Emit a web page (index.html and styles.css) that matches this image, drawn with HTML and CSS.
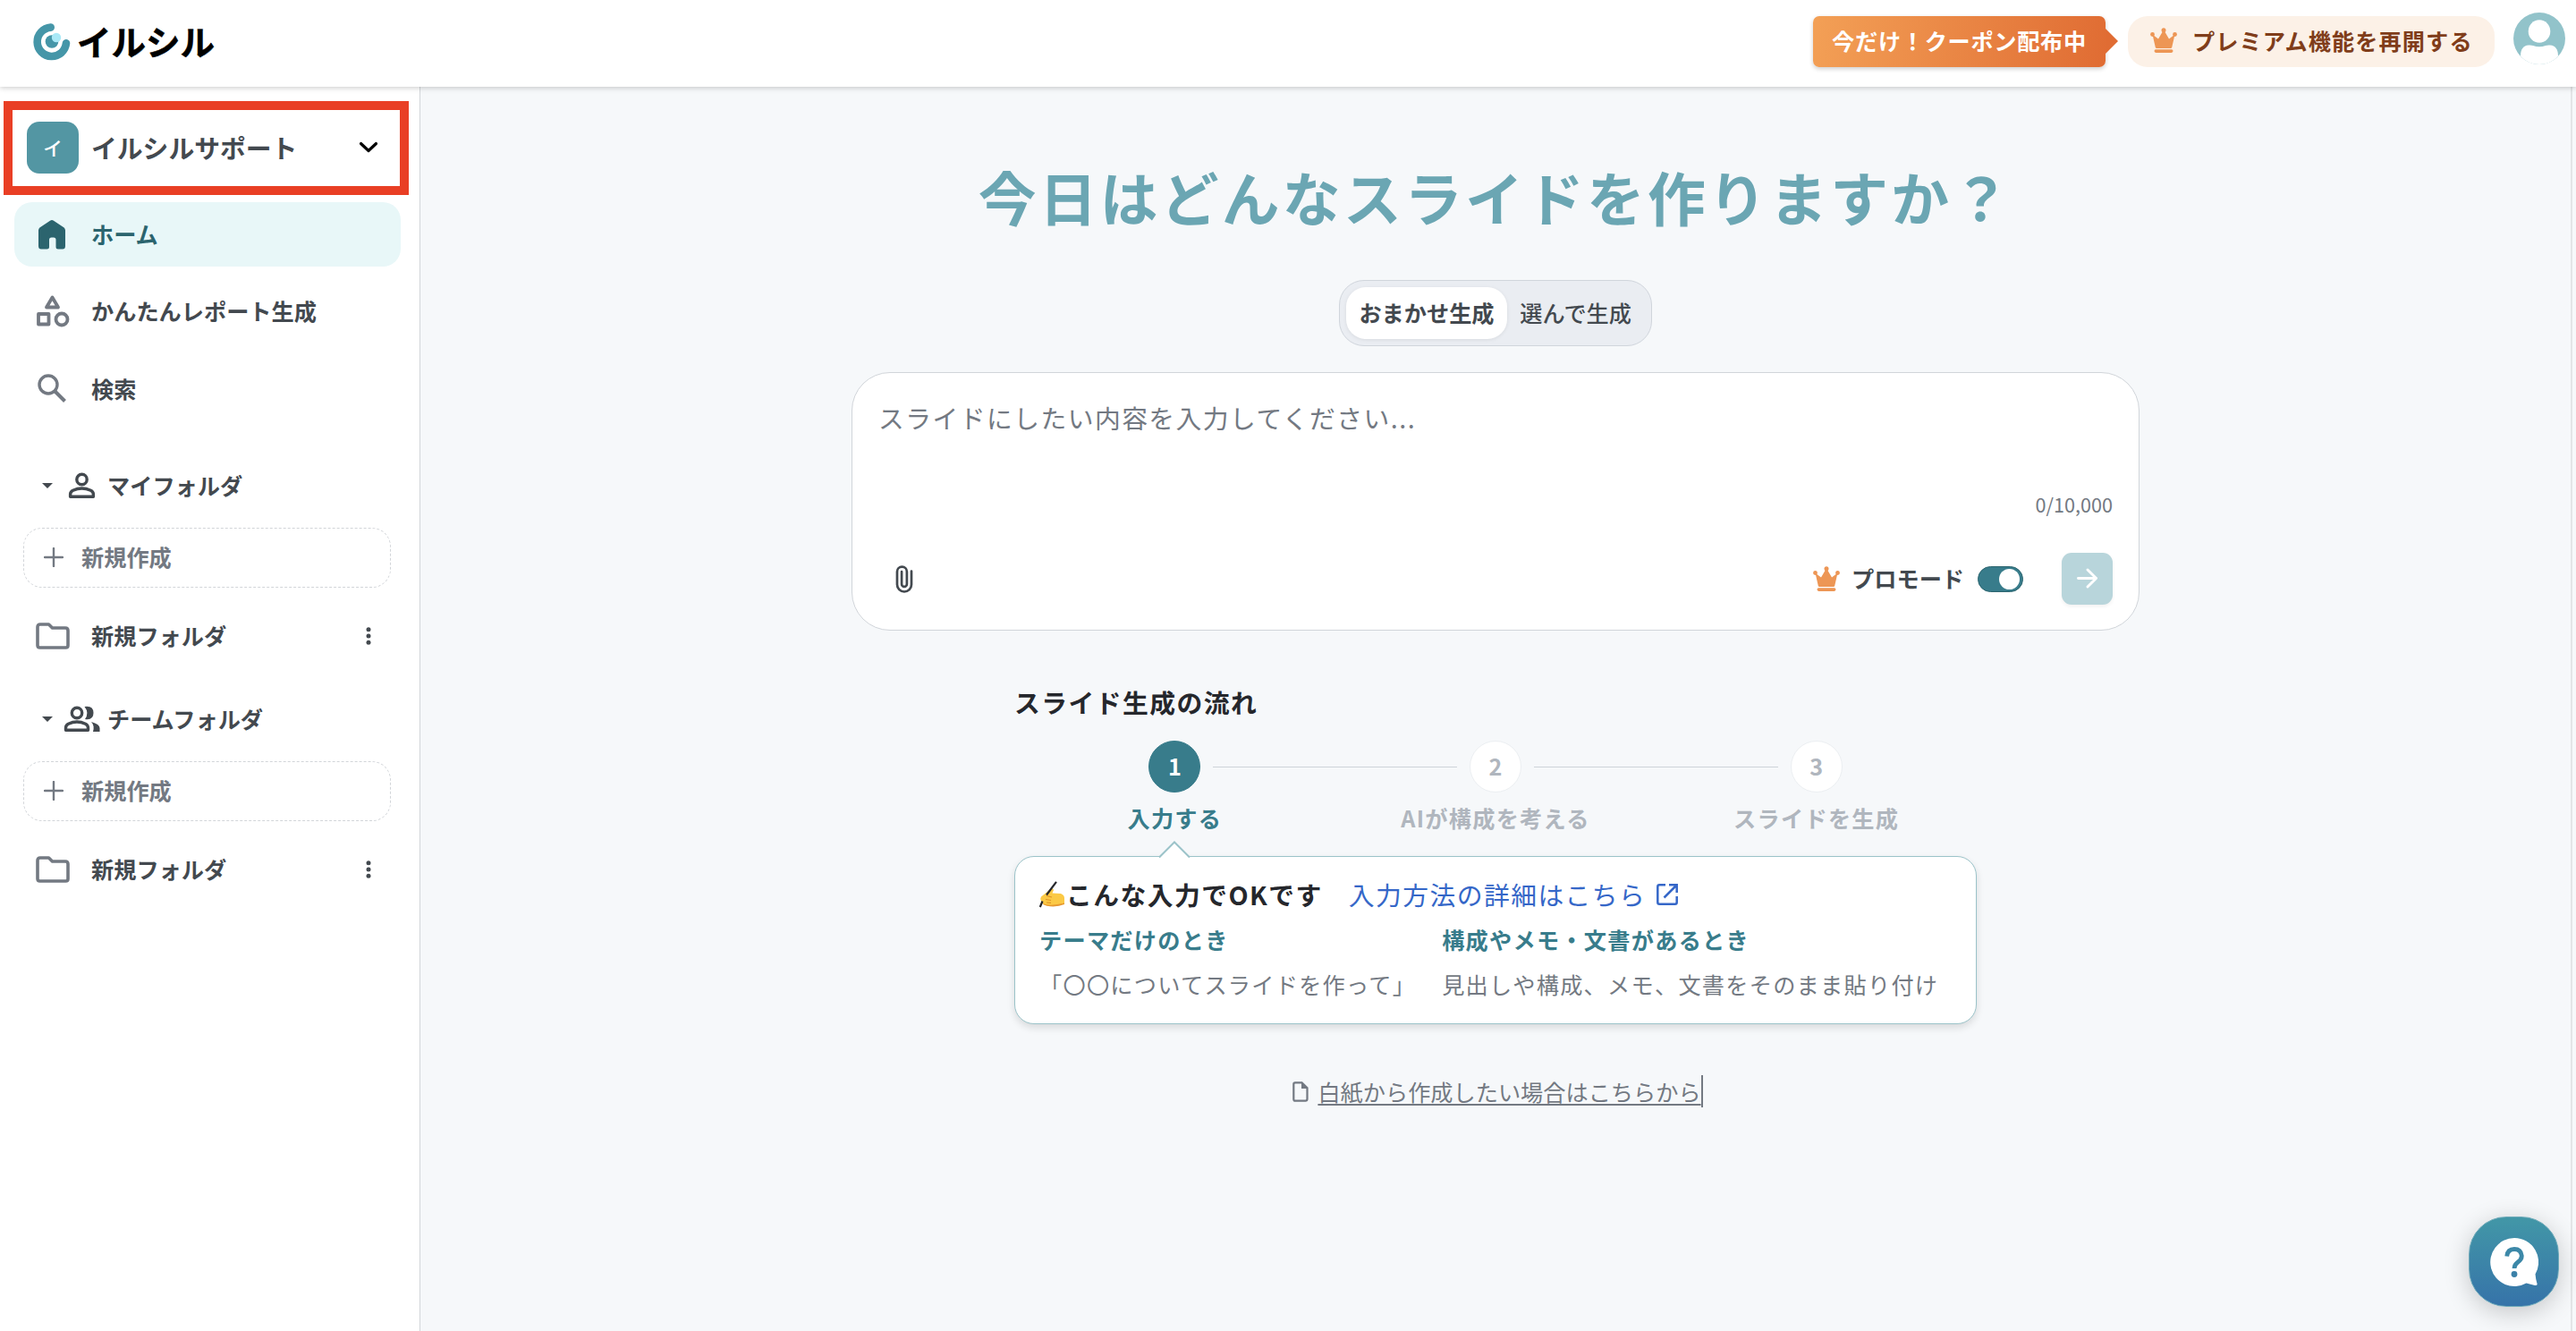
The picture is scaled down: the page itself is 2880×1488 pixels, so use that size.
FILE: index.html
```
<!DOCTYPE html>
<html lang="ja">
<head>
    <meta charset="UTF-8">
    <meta name="viewport" content="width=device-width, initial-scale=1.0">
    <title>イルシル</title>
    <link rel="stylesheet" href="styles.css">
</head>
<body>

    <!-- Shared icons -->
    <svg class="sprite" width="0" height="0">
        <symbol id="crown" viewBox="0 0 30 28">
            <path d="M2.500 7.500 9 12.500 14 4h2l5 8.500 6.500-5-3.300 14.500q-.3 1-1.400 1H7.200q-1.100 0-1.400-1z"/>
            <circle cx="15" cy="2.700" r="2.500"/><circle cx="2.500" cy="7.500" r="2.400"/><circle cx="27.500" cy="7.500" r="2.400"/>
            <rect x="4.500" y="24.300" width="21" height="3.600" rx="1.800"/>
        </symbol>
        <symbol id="folder" viewBox="0 0 38 30">
            <path d="M5 2h9.500l4 4H33q3 0 3 3v16.500q0 2.500-2.500 2.500H4.500Q2 28 2 25.500V5q0-3 3-3z" fill="none" stroke="currentColor" stroke-width="3.600" stroke-linejoin="round"/>
        </symbol>
        <symbol id="plus" viewBox="0 0 22 22">
            <path d="M11 1v20M1 11h20" stroke="currentColor" stroke-width="2.400" stroke-linecap="round"/>
        </symbol>
        <symbol id="dots" viewBox="0 0 6 20">
            <circle cx="3" cy="2.800" r="2.500"/><circle cx="3" cy="10" r="2.500"/><circle cx="3" cy="17.200" r="2.500"/>
        </symbol>
    </svg>

    <header class="header">
        <div class="logo">
            <svg class="logo-mark" viewBox="0 0 42 42">
                <path d="M19.700 4.600A16.200 16.200 0 1 0 37 22.200" fill="none" stroke="#4596a8" stroke-width="8.600" stroke-linecap="round"/>
                <circle cx="21" cy="20.500" r="7.300" fill="#4596a8"/>
                <circle cx="26" cy="16" r="5.200" fill="#a9e9f7"/>
            </svg>
            <span class="logo-text">イルシル</span>
        </div>
        <div class="header-right">
            <div class="coupon">今だけ！クーポン配布中</div>
            <div class="premium">
                <svg class="crown"><use href="#crown"/></svg>
                <span>プレミアム機能を再開する</span>
            </div>
            <svg class="user" viewBox="0 0 58 58">
                <circle cx="29" cy="29" r="29" fill="#92c3ca"/>
                <ellipse cx="29" cy="21" rx="12.300" ry="12.800" fill="#fff"/>
                <path d="M8 49q0-12 9-12.500 3-.3 5 .6 7 2.400 14 0 2-.9 5-.6 9 .5 9 12.500-9 9-21 9T8 49z" fill="#fff"/>
            </svg>
        </div>
    </header>

    <div class="layout">
        <aside class="sidebar">
            <div class="workspace">
                <div class="workspace-icon">イ</div>
                <span class="workspace-name">イルシルサポート</span>
                <svg class="chevron" viewBox="0 0 22 14"><path d="M2.500 2.500 11 10.500l8.500-8" fill="none" stroke="#000" stroke-width="3.200" stroke-linecap="round" stroke-linejoin="round"/></svg>
            </div>

            <nav class="menu">
                <div class="menu-item active">
                    <svg class="menu-icon" viewBox="0 0 40 40"><path d="M5 15.500q0-2 1.700-3.300L18 4.800q2-1.500 4 0l11.300 7.400Q35 13.500 35 15.500V33q0 3.500-3 3.500h-5q-2.500 0-2.500-2.500v-8q0-2.500-2.500-2.500h-2.500q-2.500 0-2.500 2.500v8q0 2.500-2.500 2.500H8q-3 0-3-3.500z" fill="currentColor"/></svg>
                    <span>ホーム</span>
                </div>
                <div class="menu-item">
                    <svg class="menu-icon" viewBox="0 0 40 40" fill="none" stroke="currentColor" stroke-width="3.800" stroke-linejoin="round"><path d="M20.500 4.500 27 15.500H14z"/><rect x="5" y="23" width="11.500" height="11.500"/><circle cx="31" cy="29" r="6.500"/></svg>
                    <span>かんたんレポート生成</span>
                </div>
                <div class="menu-item">
                    <svg class="menu-icon" viewBox="0 0 40 40" fill="none" stroke="currentColor" stroke-width="3.400"><circle cx="16" cy="15" r="10"/><path d="M23 22 34.500 33.500" stroke-width="4"/></svg>
                    <span>検索</span>
                </div>
            </nav>

            <section class="folders">
                <div class="folders-title">
                    <span class="caret"></span>
                    <svg class="folders-icon" viewBox="0 0 42 32" fill="none" stroke="currentColor" stroke-width="3.400"><circle cx="21.500" cy="9" r="5.700"/><path d="M8.600 28.300v-2.500q0-3 3-4.500 9.900-4.600 19.800 0 3 1.500 3 4.500v2.500z" stroke-linejoin="round"/></svg>
                    <span>マイフォルダ</span>
                </div>
                <div class="create"><svg><use href="#plus"/></svg><span>新規作成</span></div>
                <div class="folder-row">
                    <svg class="folder-icon"><use href="#folder"/></svg>
                    <span>新規フォルダ</span>
                    <svg class="dots"><use href="#dots"/></svg>
                </div>
            </section>

            <section class="folders">
                <div class="folders-title">
                    <span class="caret"></span>
                    <svg class="folders-icon" viewBox="0 0 42 32" fill="none" stroke="currentColor" stroke-width="3.400"><circle cx="16" cy="9" r="5.700"/><path d="M3.500 28.300v-2.500q0-3 3-4.500 9.500-4.600 19 0 3 1.500 3 4.500v2.500z" stroke-linejoin="round"/><path d="M24.500 2q10-1.500 10 7t-9.500 7q5-7-.5-14zM32 19q9.500 2.500 9.500 7v4H34q2-7-2-11z" fill="currentColor" stroke="none"/></svg>
                    <span>チームフォルダ</span>
                </div>
                <div class="create"><svg><use href="#plus"/></svg><span>新規作成</span></div>
                <div class="folder-row">
                    <svg class="folder-icon"><use href="#folder"/></svg>
                    <span>新規フォルダ</span>
                    <svg class="dots"><use href="#dots"/></svg>
                </div>
            </section>
        </aside>

        <main class="main">
            <h1>今日はどんなスライドを作りますか？</h1>

            <div class="tabs">
                <div class="tab selected">おまかせ生成</div>
                <div class="tab">選んで生成</div>
            </div>

            <div class="prompt">
                <div class="placeholder">スライドにしたい内容を入力してください...</div>
                <div class="counter">0/10,000</div>
                <div class="prompt-bar">
                    <svg class="clip" viewBox="0 0 20 31"><path d="M18 6.500V21.500a8 8 0 0 1-16 0V7a5.400 5.400 0 0 1 10.900 0V21a2.900 2.900 0 0 1-5.800 0V7" fill="none" stroke="#43494f" stroke-width="2.700" stroke-linecap="round"/></svg>
                    <svg class="crown"><use href="#crown"/></svg>
                    <span class="pro-label">プロモード</span>
                    <span class="switch"></span>
                    <div class="send"><svg viewBox="0 0 24 24"><path d="M1.500 12h21M12.500 2l10 10-10 10" fill="none" stroke="#fff" stroke-width="3" stroke-linecap="round" stroke-linejoin="round"/></svg></div>
                </div>
            </div>

            <div class="flow">
                <h2>スライド生成の流れ</h2>
                <div class="steps">
                    <div class="step current"><span class="num">1</span><span>入力する</span></div>
                    <div class="step"><span class="num">2</span><span>AIが構成を考える</span></div>
                    <div class="step"><span class="num">3</span><span>スライドを生成</span></div>
                </div>
                <div class="tips">
                    <svg class="pointer" viewBox="0 0 36 20"><path d="M1 18.500 18 1.500l17 17V20H1z" fill="#fff"/><path d="M1 18.500 18 1.500l17 17" fill="none" stroke="#9bc3c9" stroke-width="2"/></svg>
                    <div class="tips-head">
                        <svg class="hand" viewBox="0 0 28 30">
                            <path d="M2 17.500 12 9.500q3-2 4 .5l-1.500 3.500 9.500.5q4 1.500 4 5v6.500l-4 .7q-6 2.500-14 1.500-6-1-6.500-3L2 22q-1.500-2 0-4.500z" fill="#fbc945"/>
                            <path d="M4 25q8 3.500 24-.5v1.500q-7 3-16 2.300-7-.7-8-3.300z" fill="#e79a31"/>
                            <path d="M8 16.500 14 18M7 20.500l6 1M8 24l5 .3" stroke="#df9327" stroke-width="1.200" fill="none"/>
                            <path d="M19 .800 8 15.500M3.500 22.500.800 29" stroke="#25262b" stroke-width="2.200" fill="none"/>
                        </svg>
                        <strong>こんな入力でOKです</strong>
                        <a class="guide">入力方法の詳細はこちら</a>
                        <svg class="external" viewBox="0 0 24 24"><path d="M10 1.300H3.300q-2 0-2 2v17.400q0 2 2 2h17.400q2 0 2-2V14M14 1.300h8.700V10M22 2 8.500 15.500" fill="none" stroke="#3567c8" stroke-width="2.500"/></svg>
                    </div>
                    <div class="tips-cols">
                        <div>
                            <h3>テーマだけのとき</h3>
                            <p>「〇〇についてスライドを作って」</p>
                        </div>
                        <div>
                            <h3>構成やメモ・文書があるとき</h3>
                            <p>見出しや構成、メモ、文書をそのまま貼り付け</p>
                        </div>
                    </div>
                </div>
            </div>

            <div class="blank">
                <svg viewBox="0 0 18 23"><path d="M3 1.300h7.500l6 6V19.500q0 2.200-2 2.200H3q-1.700 0-1.700-2V3Q1.300 1.300 3 1.300z" fill="none" stroke="#737982" stroke-width="2.200"/><path d="M10 1v7h7z" fill="#737982"/></svg>
                <a>白紙から作成したい場合はこちらから</a>
            </div>
        </main>
    </div>

    <div class="help">
        <svg viewBox="0 0 54 56">
            <path d="M27 0a27 27 0 0 1 23.500 40.500q.5 6 2 10.500.5 2.500-2.500 2-5-1.500-9.500-2.500A27 27 0 1 1 27 0z" fill="#fff"/>
            <path d="M18.700 20.500q.8-8 8.300-8t8.300 7.500q0 4-4.300 7-4 2.800-4 7" fill="none" stroke="#3c88a8" stroke-width="4.800"/>
            <circle cx="27" cy="40.500" r="3.400" fill="#3b81a8"/>
        </svg>
    </div>

</body>
</html>
```
FILE: styles.css
```
* {
    box-sizing: border-box;
}
body {
    margin: 0;
    height: 1488px;
    overflow: hidden;
    display: flex;
    flex-direction: column;
    font-family: "Noto Sans CJK JP", sans-serif;
    font-size: 25.2px;
    line-height: 36px;
    color: #43494f;
    background-color: #f6f8fa;
}
h1, h2, h3, p {
    margin: 0;
}
svg {
    display: block;
    flex: none;
}
.sprite {
    position: absolute;
}

/* Header */
.header {
    position: relative;
    z-index: 2;
    flex: none;
    height: 97px;
    display: flex;
    justify-content: space-between;
    padding: 0 12px 0 37px;
    background-color: #fff;
    box-shadow: 0 1px 6px rgba(0, 0, 0, 0.22);
}
.logo {
    display: flex;
    align-items: center;
    height: 93px;
    gap: 7px;
}
.logo-mark {
    width: 42px;
    height: 42px;
}
.logo-text {
    padding-bottom: 3px;
    font-size: 38.5px;
    font-weight: 700;
    line-height: 42px;
    color: #000;
    -webkit-text-stroke: 0.6px #000;
}
.header-right {
    display: flex;
    align-items: flex-start;
    font-weight: 700;
    letter-spacing: 0.7px;
}
.coupon {
    position: relative;
    width: 327px;
    height: 57px;
    margin: 18px 25px 0 0;
    line-height: 55px;
    text-align: center;
    color: #fff;
    border-radius: 7px;
    background: linear-gradient(100deg, #f3a056, #e06c33);
    box-shadow: 0 2px 5px rgba(0, 0, 0, 0.2);
}
.coupon::after {
    content: "";
    position: absolute;
    right: -14px;
    top: 14px;
    border: 14px solid transparent;
    border-right: 0;
    border-left-color: #e06c33;
}
.premium {
    display: flex;
    align-items: center;
    width: 410px;
    height: 57px;
    margin: 18px 21px 0 0;
    padding-left: 25px;
    gap: 17px;
    border-radius: 22px;
    background-color: #fcf1e7;
    color: #803d1a;
    letter-spacing: 1.1px;
    white-space: nowrap;
}
.premium span {
    line-height: 55px;
    height: 57px;
}
.premium .crown {
    margin-bottom: 3px;
}
.crown {
    width: 30px;
    height: 28px;
    fill: #ed9655;
}
.user {
    width: 58px;
    height: 58px;
    margin-top: 14px;
}

.layout {
    flex: 1;
    display: flex;
    min-height: 0;
}

/* Sidebar */
.sidebar {
    flex: none;
    width: 470px;
    padding-top: 16px;
    background-color: #fff;
    border-right: 1px solid #d2d5d9;
    font-weight: 700;
}
.workspace {
    display: flex;
    align-items: center;
    width: 453px;
    height: 105px;
    margin-left: 4px;
    padding: 0 24px 1px 16px;
    border: 10px solid #e93f25;
}
.workspace-icon {
    width: 58px;
    height: 58px;
    margin-right: 14px;
    border-radius: 14px;
    background-color: #5396a3;
    color: #fff;
    font-size: 21.6px;
    font-weight: 500;
    line-height: 58px;
    text-align: center;
}
.workspace-name {
    flex: 1;
    font-size: 28.8px;
}
.chevron {
    width: 22px;
    height: 14px;
}
.menu {
    display: flex;
    flex-direction: column;
    gap: 14.4px;
    padding: 8px 21px 0 16px;
}
.menu-item {
    display: flex;
    align-items: center;
    height: 72px;
    padding-left: 22px;
    gap: 24px;
    border-radius: 20px;
}
.menu-item span,
.folders-title span,
.create span,
.folder-row span {
    padding-bottom: 2px;
}
.menu-item.active {
    background-color: #e8f7f8;
    color: #2b646e;
}
.menu-icon {
    width: 40px;
    height: 40px;
    color: #737982;
}
.active .menu-icon {
    color: #2b646e;
}
.folders {
    padding: 52px 32px 0 26px;
}
.folders + .folders {
    padding-top: 37px;
}
.folders-title {
    display: flex;
    align-items: center;
    height: 40px;
    padding-left: 21px;
}
.folders-title .caret {
    padding: 0;
    border: 6px solid transparent;
    border-top-color: #43494f;
    border-bottom: 0;
}
.folders-icon {
    width: 42px;
    height: 32px;
    margin: 0 8px 0 11px;
}
.create {
    display: flex;
    align-items: center;
    height: 67px;
    margin: 27px 0 18px;
    padding-left: 22px;
    gap: 20px;
    border: 1px dashed #d2d5d9;
    border-radius: 21px;
    color: #737982;
}
.create svg {
    width: 22px;
    height: 22px;
}
.folder-row {
    display: flex;
    align-items: center;
    height: 72px;
    padding: 0 22px 0 14px;
    gap: 24px;
}
.folder-row span {
    flex: 1;
}
.folder-icon {
    width: 38px;
    height: 30px;
    color: #737982;
}
.dots {
    width: 6px;
    height: 20px;
    fill: #43494f;
}

/* Main area */
.main {
    flex: 1;
    display: flex;
    flex-direction: column;
    align-items: center;
    margin-right: 4px;
    padding-top: 75px;
    border-right: 2px solid #e3e5e7;
}
h1 {
    font-size: 64.8px;
    line-height: 94px;
    font-weight: 700;
    letter-spacing: 0.05em;
    color: #6ba6b3;
    white-space: nowrap;
}
.tabs {
    display: flex;
    width: 350px;
    height: 74px;
    margin-top: 47px;
    padding: 7px;
    border: 1px solid #d0d5dc;
    border-radius: 28px;
    background-color: #eaedf2;
}
.tab {
    padding: 0 14.4px;
    line-height: 56px;
    font-weight: 500;
}
.tab.selected {
    height: 58px;
    font-weight: 700;
    border-radius: 22px;
    background-color: #fff;
    box-shadow: 0 1px 4px rgba(0, 0, 0, 0.08);
}
.prompt {
    width: 1440px;
    height: 289px;
    margin-top: 29px;
    padding: 30px 29px 28px;
    border: 1px solid #d1d5da;
    border-radius: 43px;
    background-color: #fff;
}
.placeholder {
    height: 99px;
    font-size: 28.8px;
    line-height: 40px;
    letter-spacing: 0.05em;
    color: #737982;
}
.counter {
    font-size: 21.6px;
    text-align: right;
    color: #737982;
}
.prompt-bar {
    display: flex;
    align-items: center;
    height: 58px;
    margin-top: 36px;
}
.clip {
    width: 20px;
    height: 31px;
    margin: 0 auto 0 19px;
}
.pro-label {
    margin: 0 15px 0 13px;
    padding-bottom: 2px;
    font-weight: 700;
}
.switch {
    width: 51px;
    height: 29px;
    margin-right: 43px;
    padding: 2px 3px;
    border: 1px solid #2b646e;
    border-radius: 15px;
    background-color: #387c8b;
}
.switch::after {
    content: "";
    display: block;
    width: 23px;
    height: 23px;
    margin-left: auto;
    border-radius: 50%;
    background-color: #fff;
}
.send {
    width: 57px;
    height: 58px;
    padding: 17px;
    border-radius: 11px;
    background-color: #b8d5db;
    box-shadow: 0 2px 4px rgba(0, 0, 0, 0.06);
}

/* Generation flow */
.flow {
    width: 1076px;
    margin-top: 60px;
    letter-spacing: 0.05em;
}
h2 {
    font-size: 28.8px;
    line-height: 40px;
    font-weight: 700;
    letter-spacing: 0.05em;
    color: #25272c;
}
.steps {
    display: flex;
    margin-top: 23px;
}
.step {
    position: relative;
    flex: 1;
    display: flex;
    flex-direction: column;
    align-items: center;
    gap: 10px;
    font-weight: 700;
    color: #b0b6be;
}
.num {
    width: 58px;
    height: 58px;
    line-height: 54px;
    text-align: center;
    letter-spacing: 0;
    border: 1px solid #eceff2;
    border-radius: 50%;
    background-color: #fff;
}
.current {
    color: #387c8b;
}
.current .num {
    border-color: #387c8b;
    background-color: #387c8b;
    color: #fff;
}
/* line between two steps */
.step + .step::before {
    content: "";
    position: absolute;
    top: 29px;
    right: calc(50% + 43px);
    width: 273px;
    height: 1px;
    background-color: #ced3d8;
}
.tips {
    position: relative;
    height: 188px;
    margin-top: 25px;
    padding: 22px 27px;
    border: 1.5px solid #9bc3c9;
    border-radius: 22px;
    background-color: #fff;
    box-shadow: 0 4px 8px rgba(0, 0, 0, 0.12);
}
.pointer {
    position: absolute;
    left: 160px;
    top: -18px;
    width: 36px;
    height: 20px;
}
.tips-head {
    display: flex;
    align-items: center;
    height: 40px;
    font-size: 28.8px;
    letter-spacing: 0.05em;
    color: #25272c;
}
.hand {
    width: 28px;
    height: 30px;
    margin-right: 2px;
}
.guide {
    margin: 0 12px 0 29px;
    color: #3567c8;
}
.external {
    width: 24px;
    height: 24px;
}
.tips-cols {
    display: flex;
    gap: 29px;
    margin-top: 12px;
    letter-spacing: 0.05em;
    white-space: nowrap;
}
h3 {
    font-size: 25.2px;
    font-weight: 700;
    color: #387c8b;
}
.tips-cols p {
    margin-top: 14px;
    color: #737982;
}

/* Blank slide link */
.blank {
    display: flex;
    align-items: center;
    gap: 10px;
    margin-top: 57px;
    padding-left: 5px;
    color: #737982;
}
.blank svg {
    width: 18px;
    height: 23px;
}
.blank a {
    height: 36px;
    line-height: 36px;
    border-right: 2px solid #737982;
    text-decoration: underline;
    text-decoration-thickness: 2px;
    text-underline-offset: 3px;
}

/* Help button */
.help {
    position: absolute;
    right: 19px;
    bottom: 27px;
    z-index: 3;
    width: 101px;
    height: 101px;
    padding: 23px;
    border: 1px solid #6faab9;
    border-radius: 42px;
    background: linear-gradient(#4297a7, #3673a9);
    box-shadow: 0 6px 28px rgba(0, 0, 0, 0.2);
}
.help svg {
    width: 54px;
    height: 56px;
}
```
